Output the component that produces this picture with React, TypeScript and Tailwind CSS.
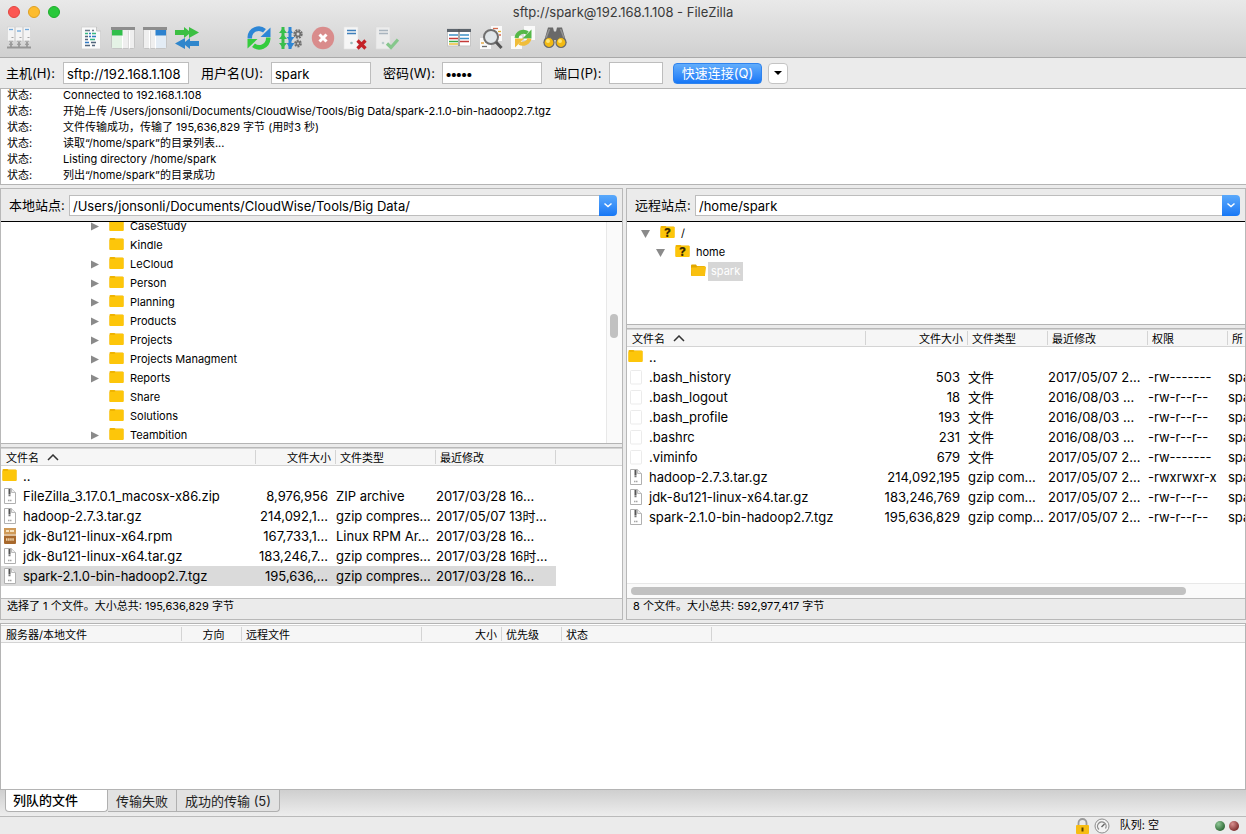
import React from "react";

type IconProps = { children: React.ReactNode; size?: number };

const Svg = ({ children, size = 24 }: IconProps) => (
  <svg width={size} height={size} viewBox="0 0 24 24" fill="none" aria-hidden="true">
    {children}
  </svg>
);

const SiteManagerIcon = () => (
  <Svg>
    {[0, 8, 16].map((x) => (
      <g key={x}>
        <rect x={x + 0.3} y="1" width="7.400" height="14" fill="#f4f4f4" stroke="#cfcfcf" strokeWidth=".6" />
        <path d={`M${x + 2} ${x === 8 ? 5 : 3.5}h4`} stroke="#6fa8dc" strokeWidth="1.300" />
        <path d={`M${x + 4.5} 11.500h2`} stroke="#a5a5a5" strokeWidth="1" />
        <path d={`M${x + 2} 15.300h4`} stroke="#a8a8a8" strokeWidth="1" />
        <path d={`M${x + 4} 16v5`} stroke="#8c8c8c" strokeWidth="1.500" />
        <path d={`M${x + 2} 18.300h4`} stroke="#9a9a9a" strokeWidth="1.200" />
      </g>
    ))}
    <path d="M0 21.500h24" stroke="#969696" strokeWidth="2" />
  </Svg>
);

const LogIcon = () => (
  <Svg>
    <path d="M2.500 1h15l4 4v18h-19z" fill="#fafafa" stroke="#cfcfcf" strokeWidth=".8" />
    <path d="M17.500 1v4h4" fill="#ddd" stroke="#bdbdbd" strokeWidth=".8" />
    <path d="M6 4.500h5M13 4.500h2" stroke="#6b7a88" strokeWidth="1.500" />
    <path d="M10 10.500h2M13 10.500h4M6 16.500h4" stroke="#2f79c4" strokeWidth="1.600" />
    <path d="M6 7.500h3M13 7.500h4M11 13.500h5" stroke="#35b883" strokeWidth="1.600" />
    <path d="M6 10.500h3M6 13.500h3M12 16.500h5M6 19.500h5M13 19.500h3" stroke="#51657b" strokeWidth="1.500" />
    <path d="M10 7.500h2" stroke="#2f79c4" strokeWidth="1.600" />
  </Svg>
);

const LocalTreeIcon = () => (
  <Svg>
    <rect x=".5" y="1.500" width="23" height="21" rx="1" fill="#efefef" stroke="#c4c4c4" />
    <path d="M0 1h24v3H0z" fill="#8d8d8d" />
    <path d="M1 4h10.500v5.500H1z" fill="#2fbf4a" />
    <path d="M1 10h10.500v12H1z" fill="#e4f2e5" />
    <path d="M11.500 10v12.500M18.500 4.500v18" stroke="#fff" />
    <path d="M17.500 4.500v18" stroke="#dadada" />
  </Svg>
);

const RemoteTreeIcon = () => (
  <Svg>
    <rect x=".5" y="1.500" width="23" height="21" rx="1" fill="#efefef" stroke="#c4c4c4" />
    <path d="M0 1h24v3H0z" fill="#8d8d8d" />
    <path d="M12.500 4H23v5.500H12.500z" fill="#2d82cf" />
    <path d="M12.500 10H23v12H12.500z" fill="#e3ecf5" />
    <path d="M12.500 10v12.500M6.500 4.500v18" stroke="#fff" />
    <path d="M7.500 4.500v18" stroke="#dadada" />
  </Svg>
);

const QueueIcon = () => (
  <Svg>
    <path d="M0 4h9V1l5 4V1l10 5.500-10 5.500V8l-5 4V9H0z" fill="#3cbf42" />
    <path d="M24 15h-9v-3l-5 4v-4L0 17.500 10 23v-4l5 4v-3h9z" fill="#2f86cc" />
  </Svg>
);

const RefreshIcon = () => (
  <Svg>
    <path d="M2.800 12.500V11A9 9 0 0 1 17.500 4.800" stroke="#2d86d6" strokeWidth="4.500" />
    <path d="M23.500 1.500v9.500H13.500z" fill="#2d86d6" />
    <path d="M21.200 11.500V13A9 9 0 0 1 6.500 19.200" stroke="#35cc3d" strokeWidth="4.500" />
    <path d="M.5 22.500V13h10z" fill="#35cc3d" />
  </Svg>
);

const ProcessIcon = () => (
  <Svg>
    <path d="M4 1v22" stroke="#38bf4c" strokeWidth="3" />
    <path d="M0 7l4-5 4 5zM0 13l4-5 4 5zM0 17l4 5 4-5z" fill="#38bf4c" />
    <path d="M11 1v22" stroke="#2f86d4" strokeWidth="3" />
    <path d="M7.500 17l4 6 4-6zM7.500 11l4 5 4-5zM8 7l3-4 3 4z" fill="#2f86d4" />
    <circle cx="19" cy="8" r="3.200" stroke="#6f6f6f" strokeWidth="3" strokeDasharray="1.700 .8" />
    <circle cx="19" cy="8" r="2.400" stroke="#6f6f6f" strokeWidth="1.400" />
    <circle cx="19" cy="17.500" r="2.400" stroke="#6f6f6f" strokeWidth="3" strokeDasharray="1.500 .8" />
    <circle cx="19" cy="17.500" r="1.800" stroke="#6f6f6f" strokeWidth="1.200" />
  </Svg>
);

const CancelIcon = () => (
  <Svg>
    <circle cx="12" cy="12" r="11.200" fill="#d98c8c" />
    <path d="M8.500 8.500l7 7M15.500 8.500l-7 7" stroke="#fff" strokeWidth="3" />
  </Svg>
);

const DisconnectIcon = () => (
  <Svg>
    <path d="M1 1h14v22H1z" fill="#f6f6f6" stroke="#e4e4e4" strokeWidth=".6" />
    <path d="M4 4.500h9M4 7.500h9" stroke="#3f7fbb" strokeWidth="1.500" />
    <circle cx="8.500" cy="17" r="1.300" fill="#9bb" />
    <path d="M14.500 14.500l8 8M22.500 14.500l-8 8" stroke="#c42127" strokeWidth="3.200" />
  </Svg>
);

const ReconnectIcon = () => (
  <Svg>
    <path d="M1 1h14v22H1z" fill="#ececec" stroke="#dcdcdc" strokeWidth=".6" />
    <path d="M4 4.500h9M4 7.500h9" stroke="#a9b4be" strokeWidth="1.500" />
    <circle cx="8" cy="17" r="1.300" fill="#bcc" />
    <path d="M12 17.500l4 4 7-8" stroke="#86c78c" strokeWidth="3.200" />
  </Svg>
);

const FilterIcon = () => (
  <Svg>
    <rect x=".5" y="3" width="23" height="17" fill="#fff" stroke="#c5c5c5" />
    <path d="M0 3h24v3H0z" fill="#5d656d" />
    <path d="M2 9h9M13 9h9" stroke="#3f93c8" strokeWidth="1.500" />
    <path d="M2 12.500h9" stroke="#c43a38" strokeWidth="1.500" />
    <path d="M2 15.500h9" stroke="#35ae48" strokeWidth="1.500" />
    <path d="M2 18h9" stroke="#e9b51d" strokeWidth="1.300" />
    <path d="M13 12.500h9" stroke="#3f93c8" strokeWidth="1.500" />
    <path d="M13 15.500h9" stroke="#c43a38" strokeWidth="1.500" />
    <path d="M12 3v17" stroke="#555" />
  </Svg>
);

const SearchIcon = () => (
  <Svg>
    <path d="M12 0h11v15H12zM1 12h11v11H1z" fill="#fafafa" />
    <path d="M14 2.500h5" stroke="#d46a4c" strokeWidth="1.300" />
    <path d="M19 5.500h3" stroke="#e2b032" strokeWidth="1.300" />
    <path d="M20 9h2" stroke="#d46a4c" strokeWidth="1.300" />
    <path d="M2 17h3" stroke="#e2a032" strokeWidth="1.300" />
    <path d="M3 20.500h5" stroke="#6c6c6c" strokeWidth="1.300" />
    <circle cx="12" cy="11" r="7" fill="#dfe5e8" fillOpacity=".95" stroke="#707070" strokeWidth="2" />
    <path d="M17 16l5.500 6" stroke="#555" strokeWidth="3" />
  </Svg>
);

const SyncIcon = () => (
  <Svg>
    <path d="M13 0h11v14H13zM0 10h11v13H0z" fill="#fafafa" />
    <path d="M5.500 12a7 7 0 0 1 11-5" stroke="#55b848" strokeWidth="4" />
    <path d="M20.500 3.500v9h-9z" fill="#55b848" />
    <path d="M18.500 12.500a7 7 0 0 1-10 4.500" stroke="#f0bd3a" strokeWidth="4" />
    <path d="M4 21.500v-9h9z" fill="#f0bd3a" />
  </Svg>
);

const BinocularsIcon = () => (
  <Svg>
    <path d="M5 1.500h5l1 4h2l1-4h5L23.500 17l-9 2-1.500-5h-2l-1.500 5-9-2z" fill="#696969" />
    <path d="M6.500 3L3 12M17.500 3l3.500 9" stroke="#929292" strokeWidth="1.500" />
    <circle cx="6" cy="16.500" r="5" fill="#f3ba12" stroke="#6a6a6a" strokeWidth="1.200" />
    <circle cx="18" cy="16.500" r="5" fill="#f3ba12" stroke="#6a6a6a" strokeWidth="1.200" />
    <circle cx="5" cy="15" r="2" fill="#ffe676" />
    <circle cx="17" cy="15" r="2" fill="#ffe676" />
  </Svg>
);

const FolderIcon = ({ open, unknown }: { open?: boolean; unknown?: boolean }) => (
  <span className="relative block h-[14px] w-[15px] shrink-0">
    <svg width="15" height="14" viewBox="0 0 15 14" aria-hidden="true">
      {open ? (
        <>
          <path d="M0 1.500q0-1 1-1h4l1 1.500h7q1 0 1 1v9H1q-1 0-1-1z" fill="#e2a800" />
          <path d="M0 4.500q0-1 1-1h4.500l1-1H14q1 0 1 1l-1 7.500q0 1-1 1H1.500q-1 0-1-1z" fill="#f9c010" />
        </>
      ) : (
        <>
          <path d="M.5 1q0-1 1-1h4l1 .5h7q1 0 1 1v9.500q0 1-1 1h-12q-1 0-1-1z" fill="#f0b400" />
          <path d="M.5 2h5l1-1h8v10q0 1-1 1h-12q-1 0-1-1z" fill="#fdc60a" />
        </>
      )}
    </svg>
    {unknown && (
      <span className="absolute inset-0 text-center text-[12px] leading-[13px] font-extrabold text-[#3a2c00]">?</span>
    )}
  </span>
);

const FileIcon = () => (
  <svg width="15" height="16" viewBox="0 0 15 16" className="shrink-0" aria-hidden="true">
    <rect x="2.500" y="1.500" width="11" height="13.500" rx="1" fill="#fff" stroke="#ebebeb" />
  </svg>
);

const ArchiveIcon = () => (
  <svg width="15" height="16" viewBox="0 0 15 16" className="shrink-0" aria-hidden="true">
    <path d="M2.500.5h7l4 4v11h-11z" fill="#fff" stroke="#b0b0b0" />
    <path d="M9.500.5v4h4" fill="#eee" stroke="#bcbcbc" />
    <path d="M7.500 1v5.500" stroke="#555" strokeWidth="2" />
    <path d="M6.500 7.500h2" stroke="#777" strokeWidth="1.500" />
    <path d="M6 12.500h4" stroke="#a5a5a5" strokeWidth="1.500" strokeDasharray="1.500 .5" />
  </svg>
);

const RpmIcon = () => (
  <svg width="15" height="16" viewBox="0 0 15 16" className="shrink-0" aria-hidden="true">
    <rect x="2" y="0" width="12" height="16" rx="1" fill="#a8692d" />
    <path d="M2 1q0-1 1-1h10q1 0 1 1v5H2z" fill="#cf9a58" />
    <path d="M4 3h3M8 3h4" stroke="#f5e0bc" strokeWidth="2" />
    <path d="M2 7h12" stroke="#f0dcc0" strokeWidth="1.500" />
    <path d="M4 11.500h8" stroke="#f0d3a8" strokeWidth="2.500" strokeDasharray="1.500 .6" />
  </svg>
);

type Kind = "up" | "file" | "archive" | "rpm";
const RowIcon = ({ kind }: { kind: Kind }) =>
  kind === "up" ? <FolderIcon /> : kind === "file" ? <FileIcon /> : kind === "rpm" ? <RpmIcon /> : <ArchiveIcon />;

const toolGroups = [
  [{ label: "站点管理器", Icon: SiteManagerIcon }],
  [
    { label: "消息日志", Icon: LogIcon },
    { label: "本地目录树", Icon: LocalTreeIcon },
    { label: "远程目录树", Icon: RemoteTreeIcon },
    { label: "传输队列", Icon: QueueIcon },
  ],
  [
    { label: "刷新", Icon: RefreshIcon },
    { label: "处理队列", Icon: ProcessIcon },
    { label: "取消", Icon: CancelIcon },
    { label: "断开连接", Icon: DisconnectIcon },
    { label: "重新连接", Icon: ReconnectIcon },
  ],
  [
    { label: "过滤器", Icon: FilterIcon },
    { label: "目录比较", Icon: SearchIcon },
    { label: "同步浏览", Icon: SyncIcon },
    { label: "搜索文件", Icon: BinocularsIcon },
  ],
];

const logLines = [
  "Connected to 192.168.1.108",
  "开始上传 /Users/jonsonli/Documents/CloudWise/Tools/Big Data/spark-2.1.0-bin-hadoop2.7.tgz",
  "文件传输成功，传输了 195,636,829 字节 (用时3 秒)",
  "读取“/home/spark”的目录列表...",
  "Listing directory /home/spark",
  "列出“/home/spark”的目录成功",
];

const localTree: [string, boolean][] = [
  ["CaseStudy", true],
  ["Kindle", false],
  ["LeCloud", true],
  ["Person", true],
  ["Planning", true],
  ["Products", true],
  ["Projects", true],
  ["Projects Managment", true],
  ["Reports", true],
  ["Share", false],
  ["Solutions", false],
  ["Teambition", true],
];

type FileRow = { kind: Kind; cells: string[]; selected?: boolean };

const localFiles: FileRow[] = [
  { kind: "up", cells: ["..", "", "", ""] },
  { kind: "archive", cells: ["FileZilla_3.17.0.1_macosx-x86.zip", "8,976,956", "ZIP archive", "2017/03/28 16..."] },
  { kind: "archive", cells: ["hadoop-2.7.3.tar.gz", "214,092,1...", "gzip compres...", "2017/05/07 13时..."] },
  { kind: "rpm", cells: ["jdk-8u121-linux-x64.rpm", "167,733,1...", "Linux RPM Ar...", "2017/03/28 16..."] },
  { kind: "archive", cells: ["jdk-8u121-linux-x64.tar.gz", "183,246,7...", "gzip compres...", "2017/03/28 16时..."] },
  { kind: "archive", cells: ["spark-2.1.0-bin-hadoop2.7.tgz", "195,636,...", "gzip compres...", "2017/03/28 16..."], selected: true },
];

const remoteFiles: FileRow[] = [
  { kind: "up", cells: ["..", "", "", "", "", ""] },
  { kind: "file", cells: [".bash_history", "503", "文件", "2017/05/07 2...", "-rw-------", "spa"] },
  { kind: "file", cells: [".bash_logout", "18", "文件", "2016/08/03 ...", "-rw-r--r--", "spa"] },
  { kind: "file", cells: [".bash_profile", "193", "文件", "2016/08/03 ...", "-rw-r--r--", "spa"] },
  { kind: "file", cells: [".bashrc", "231", "文件", "2016/08/03 ...", "-rw-r--r--", "spa"] },
  { kind: "file", cells: [".viminfo", "679", "文件", "2017/05/07 2...", "-rw-------", "spa"] },
  { kind: "archive", cells: ["hadoop-2.7.3.tar.gz", "214,092,195", "gzip com...", "2017/05/07 2...", "-rwxrwxr-x", "spa"] },
  { kind: "archive", cells: ["jdk-8u121-linux-x64.tar.gz", "183,246,769", "gzip com...", "2017/05/07 2...", "-rw-r--r--", "spa"] },
  { kind: "archive", cells: ["spark-2.1.0-bin-hadoop2.7.tgz", "195,636,829", "gzip comp...", "2017/05/07 2...", "-rw-r--r--", "spa"] },
];

const HeadCell = ({ children, right, first, last }: { children?: React.ReactNode; right?: boolean; first?: boolean; last?: boolean }) => (
  <th className="overflow-hidden p-0 font-normal">
    <div
      className={`flex h-[14px] items-center gap-2 pt-[2px] whitespace-nowrap ${first ? "pl-[5px]" : "pl-1"} ${
        right ? "justify-end pr-1" : ""
      } ${last ? "" : "border-r border-[#d4d4d4]"}`}
    >
      {children}
    </div>
  </th>
);

const SortMark = () => (
  <svg width="12" height="8" viewBox="0 0 12 8" fill="none" aria-hidden="true">
    <path d="M1 6l5-5 5 5" stroke="#333" strokeWidth="1.500" />
  </svg>
);

function FileTable({ label, heads, rows, cols }: { label: string; heads: string[]; rows: FileRow[]; cols: string[] }) {
  return (
    <table aria-label={label} className="w-full table-fixed border-collapse">
      <colgroup>
        {cols.map((c, i) => (
          <col key={i} className={c} />
        ))}
      </colgroup>
      <thead>
        <tr className="h-[17px] border-t border-b border-[#d4d4d4] bg-[#f6f6f6] text-[11px]">
          {heads.map((h, i) => (
            <HeadCell key={i} first={i === 0} right={i === 1} last={i === heads.length - 1}>
              {h}
              {i === 0 && <SortMark />}
            </HeadCell>
          ))}
        </tr>
      </thead>
      <tbody>
        {rows.map((r, n) => (
          <tr key={n} className="h-5 text-[13px] leading-5">
            {heads.map((_, i) => (
              <td
                key={i}
                className={`overflow-hidden p-0 whitespace-nowrap ${i === 1 ? "pr-2 text-right" : ""} ${
                  r.selected && i < r.cells.length ? "bg-[#dadada]" : ""
                }`}
              >
                {i === 0 ? (
                  <span className="flex items-center gap-[6px] pl-px">
                    <RowIcon kind={r.kind} />
                    {r.cells[0]}
                  </span>
                ) : (
                  r.cells[i]
                )}
              </td>
            ))}
          </tr>
        ))}
      </tbody>
    </table>
  );
}

const PathBar = ({ id, label, value }: { id: string; label: string; value: string }) => (
  <div className="flex h-[33px] items-center border-b border-black bg-[#ebebeb] pr-[5px] pl-2">
    <label htmlFor={id} className="w-[60px] shrink-0 pt-[2px] text-[13px] whitespace-nowrap">
      {label}
    </label>
    <input
      id={id}
      defaultValue={value}
      className="h-[21px] min-w-0 flex-1 border border-r-0 border-[#bdbdbd] bg-white px-[3px] pt-[2px] text-[13px] outline-none"
    />
    <button
      aria-label={`${label} 历史`}
      className="flex h-[21px] w-[18px] items-center justify-center rounded-r-[4px] bg-linear-to-b from-[#5aa9fb] to-[#1577f5]"
    >
      <svg width="10" height="6" viewBox="0 0 10 6" fill="none" aria-hidden="true">
        <path d="M1.500 1.500L5 4.500l3.500-3" stroke="#fff" strokeWidth="1.500" />
      </svg>
    </button>
  </div>
);

const Closed = () => (
  <svg width="8" height="10" viewBox="0 0 8 10" aria-hidden="true">
    <path d="M0 .5l8 4-8 4z" fill="#8a8a8a" />
  </svg>
);
const Opened = () => (
  <svg width="9" height="8" viewBox="0 0 9 8" aria-hidden="true">
    <path d="M0 0h9L4.500 8z" fill="#8a8a8a" />
  </svg>
);

const Field = ({
  id,
  label,
  value,
  labelClass,
  inputClass,
  type = "text",
}: {
  id: string;
  label: string;
  value: string;
  labelClass: string;
  inputClass: string;
  type?: string;
}) => (
  <div className="flex items-center">
    <label htmlFor={id} className={`pt-px whitespace-nowrap ${labelClass}`}>
      {label}
    </label>
    <input
      id={id}
      type={type}
      defaultValue={value}
      className={`h-[22px] border border-[#bdbdbd] bg-white px-[3px] pt-px outline-none ${inputClass}`}
    />
  </div>
);

const StatusLine = ({ children }: { children: React.ReactNode }) => (
  <div className="h-[21px] shrink-0 border-t border-[#bcbcbc] bg-[#ebebeb] pl-[6px] text-[11px] leading-[15px] whitespace-nowrap">
    {children}
  </div>
);

const queueHeads: [string, string, boolean][] = [
  ["服务器/本地文件", "w-[181px]", false],
  ["方向", "w-[60px]", false],
  ["远程文件", "w-[180px]", false],
  ["大小", "w-[80px]", true],
  ["优先级", "w-[60px]", false],
  ["状态", "w-[150px]", false],
  ["", "", false],
];

export default function App() {
  return (
    <div className="flex h-screen min-h-[760px] flex-col overflow-hidden bg-[#ebebeb] font-[Inter,'Noto_Sans_CJK_SC',sans-serif] text-black">
      <header className="shrink-0 border-b border-[#a9a9a9] bg-linear-to-b from-[#e9e9e9] to-[#d0d0d0]">
        <div className="relative flex h-6 items-center justify-center">
          <div className="absolute left-2 flex gap-2">
            <button aria-label="关闭" className="size-3 rounded-full border border-[#e2463f] bg-[#fc5753]" />
            <button aria-label="最小化" className="size-3 rounded-full border border-[#dfa023] bg-[#fdbc2e]" />
            <button aria-label="缩放" className="size-3 rounded-full border border-[#1dad2b] bg-[#28c83a]" />
          </div>
          <h1 className="pt-[2px] text-[13px] text-[#3a3a3a]">sftp://spark@192.168.1.108 - FileZilla</h1>
        </div>
        <div className="flex h-[33px] gap-10 pl-[3px]">
          {toolGroups.map((group, g) => (
            <div key={g} className="flex">
              {group.map(({ label, Icon }) => (
                <button key={label} aria-label={label} className="flex h-7 w-8 items-center justify-center">
                  <Icon />
                </button>
              ))}
            </div>
          ))}
        </div>
      </header>

      <form className="flex h-[31px] shrink-0 items-center gap-3 border-b border-[#b4b4b4] pl-[6px] text-[13px]">
        <Field id="host" label="主机(H):" value="sftp://192.168.1.108" labelClass="w-[57px]" inputClass="w-[126px]" />
        <Field id="user" label="用户名(U):" value="spark" labelClass="w-[70px]" inputClass="w-[100px]" />
        <Field
          id="pass"
          label="密码(W):"
          value="spark"
          type="password"
          labelClass="w-[59px]"
          inputClass="w-[100px] font-black"
        />
        <Field id="port" label="端口(P):" value="" labelClass="w-[55px]" inputClass="w-[54px]" />
        <div className="-ml-[2px] flex gap-[6px]">
          <button
            type="button"
            className="h-[21px] w-[89px] rounded-[4px] border border-[#2f83ee] bg-linear-to-b from-[#62adfb] to-[#1577f6] leading-[19px] whitespace-nowrap text-white"
          >
            快速连接(Q)
          </button>
          <button
            type="button"
            aria-label="快速连接历史"
            className="flex h-[21px] w-5 items-center justify-center rounded-[4px] border border-[#c4c4c4] bg-white"
          >
            <svg width="8" height="4" viewBox="0 0 8 4" aria-hidden="true">
              <path d="M0 0h8L4 4z" fill="#000" />
            </svg>
          </button>
        </div>
      </form>

      <section aria-label="消息日志" className="h-24 shrink-0 overflow-hidden border-b border-l border-[#b4b4b4] bg-white">
        <ul className="-mt-[2px] text-[11px] leading-4">
          {logLines.map((line) => (
            <li key={line} className="flex pl-[6px] whitespace-nowrap">
              <span className="w-14 shrink-0">状态:</span>
              <span>{line}</span>
            </li>
          ))}
        </ul>
      </section>

      <main className="mt-[3px] grid h-[432px] shrink-0 grid-cols-[623fr_620fr] gap-[3px]">
        <div className="flex min-w-0 flex-col border border-[#b8b8b8]">
          <PathBar id="local" label="本地站点:" value="/Users/jonsonli/Documents/CloudWise/Tools/Big Data/" />
          <div className="flex h-[222px] shrink-0 overflow-hidden border-b border-[#b4b4b4] bg-white">
            <ul className="-mt-[5px] flex-1 pl-[90px] text-[11px] leading-[19px]">
              {localTree.map(([name, parent]) => (
                <li key={name} className="flex h-[19px] items-start">
                  <span className="w-[18px] shrink-0 pt-[5px]">{parent && <Closed />}</span>
                  <span className="pt-[2px]">
                    <FolderIcon />
                  </span>
                  <span className="pl-[6px]">{name}</span>
                </li>
              ))}
            </ul>
            <div className="w-4 border-l border-[#e8e8e8] bg-[#fafafa] pt-[92px] pr-1 pl-[3px]">
              <div className="h-6 rounded-full bg-[#c1c1c1]" />
            </div>
          </div>
          <div className="mt-[3px] flex min-h-0 flex-1 flex-col border-t border-[#b8b8b8] bg-white">
            <div className="min-h-0 flex-1 overflow-hidden">
              <FileTable
                label="本地文件"
                heads={["文件名", "文件大小", "文件类型", "最近修改", ""]}
                rows={localFiles}
                cols={["w-[255px]", "w-[80px]", "w-[100px]", "w-[120px]", ""]}
              />
            </div>
            <StatusLine>选择了 1 个文件。大小总共: 195,636,829 字节</StatusLine>
          </div>
        </div>

        <div className="flex min-w-0 flex-col border border-[#b8b8b8]">
          <PathBar id="remote" label="远程站点:" value="/home/spark" />
          <ul className="h-[103px] shrink-0 border-b border-[#b4b4b4] bg-white pt-[2px] text-[11px] leading-[19px]">
            <li className="flex h-[19px] items-center pl-[14px]">
              <Opened />
              <span className="pb-px pl-[10px]">
                <FolderIcon unknown />
              </span>
              <span className="pl-[6px]">/</span>
            </li>
            <li className="flex h-[19px] items-center pl-[29px]">
              <Opened />
              <span className="pb-px pl-[10px]">
                <FolderIcon unknown />
              </span>
              <span className="pl-[6px]">home</span>
            </li>
            <li className="flex h-[19px] items-center gap-[2px] pl-[64px]">
              <span className="pb-px">
                <FolderIcon open />
              </span>
              <span className="bg-[#d6d6d6] px-[3px] text-white">spark</span>
            </li>
          </ul>
          <div className="mt-[3px] flex min-h-0 flex-1 flex-col border-t border-[#b8b8b8] bg-white">
            <div className="min-h-0 flex-1 overflow-hidden">
              <FileTable
                label="远程文件"
                heads={["文件名", "文件大小", "文件类型", "最近修改", "权限", "所"]}
                rows={remoteFiles}
                cols={["w-[239px]", "w-[102px]", "w-[80px]", "w-[100px]", "w-[80px]", ""]}
              />
            </div>
            <div className="h-[15px] shrink-0 border-t border-[#e8e8e8] bg-[#fafafa] px-1 py-[3px]">
              <div className="h-2 w-[91%] rounded-full bg-[#c1c1c1]" />
            </div>
            <StatusLine>8 个文件。大小总共: 592,977,417 字节</StatusLine>
          </div>
        </div>
      </main>

      <section aria-label="传输队列" className="mt-[3px] min-h-0 flex-1 border border-[#b4b4b4] bg-white pt-px">
        <table className="w-full table-fixed border-collapse">
          <colgroup>
            {queueHeads.map(([, w], i) => (
              <col key={i} className={w} />
            ))}
          </colgroup>
          <thead>
            <tr className="h-[17px] border-t border-b border-[#d4d4d4] bg-[#f6f6f6] text-[11px]">
              {queueHeads.map(([h, , right], i) => (
                <HeadCell key={i} first={i === 0} right={right} last={i === queueHeads.length - 1}>
                  {i === 1 ? <span className="flex-1 text-center">{h}</span> : h}
                </HeadCell>
              ))}
            </tr>
          </thead>
        </table>
      </section>

      <div role="tablist" className="flex h-[27px] shrink-0 items-start border-b border-[#bababa] bg-linear-to-b from-[#cfcfcf] to-[#ededed] pl-[5px] text-[13px]">
        <button role="tab" aria-selected="true" className="h-[22px] w-[103px] rounded-b-[4px] border border-t-0 border-[#b0b0b0] bg-white pb-[2px] pl-[7px] text-left leading-[18px] font-medium whitespace-nowrap">
          列队的文件
        </button>
        <button role="tab" aria-selected="false" className="h-[22px] w-[69px] border border-t-0 border-l-0 border-[#b0b0b0] bg-[#e2e2e2] pt-px leading-[21px] whitespace-nowrap text-[#222]">
          传输失败
        </button>
        <button role="tab" aria-selected="false" className="h-[22px] w-[103px] rounded-br-[4px] border border-t-0 border-l-0 border-[#b0b0b0] bg-[#e2e2e2] leading-[20px] whitespace-nowrap text-[#222]">
          成功的传输 (5)
        </button>
      </div>

      <footer className="flex h-[17px] shrink-0 items-center justify-end pr-[7px] text-[11px]">
        <svg width="15" height="16" viewBox="0 0 15 16" fill="none" aria-hidden="true">
          <path d="M3.500 8V5a4 4 0 0 1 8 0v3" stroke="#9a9a9a" strokeWidth="1.800" />
          <rect x="1" y="7" width="13" height="9" rx="1" fill="#f7bd12" />
          <path d="M7.500 9.500v4" stroke="#5a4200" strokeWidth="2" />
        </svg>
        <svg width="16" height="16" viewBox="0 0 16 16" fill="none" className="ml-1" aria-hidden="true">
          <circle cx="8" cy="8" r="7" fill="#f3f3f3" stroke="#8d8d8d" />
          <path d="M5 11.500a4.300 4.300 0 1 1 6.500-1" stroke="#8d8d8d" strokeWidth="1.300" />
          <path d="M7.500 9l3-3" stroke="#666" strokeWidth="1.500" />
        </svg>
        <span className="mr-14 ml-[10px] whitespace-nowrap">队列: 空</span>
        <span className="size-[10px] rounded-full bg-radial-[at_35%_30%] from-[#8fc796] to-[#0e4a16]" />
        <span className="ml-1 size-[10px] rounded-full bg-radial-[at_35%_30%] from-[#d99090] to-[#5e0c0c]" />
      </footer>
    </div>
  );
}
